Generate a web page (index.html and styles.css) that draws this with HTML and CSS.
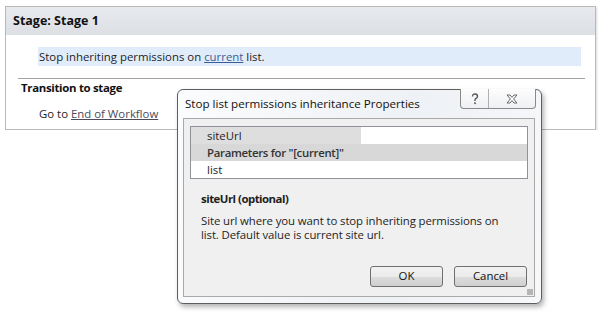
FILE: index.html
```html
<!DOCTYPE html>
<html>
<head>
<meta charset="utf-8">
<link rel="stylesheet" href="styles.css">
</head>
<body>
<div class="panel">
  <div class="panel-head">Stage: Stage 1</div>
  <div class="action">Stop inheriting permissions on <a class="lnk">current</a> list.</div>
  <div class="sep"></div>
  <div class="trans-title">Transition to stage</div>
  <div class="goto">Go to <a class="lnk visited">End of Workflow</a></div>
</div>

<div class="dialog">
  <div class="dlg-title">Stop list permissions inheritance Properties</div>
  <div class="caption-btns">
    <div class="cbtn help"><svg width="10" height="12" viewBox="0 0 10 12"><path d="M2.5 3.5 Q2.5 1 5 1 Q7.5 1 7.5 3.3 Q7.5 4.8 5.8 5.6 Q5 6 5 7.2 V8" fill="none" stroke="#555" stroke-width="1.4"/><rect x="4.2" y="9.3" width="1.6" height="1.8" fill="#555"/></svg></div>
    <div class="cbtn close"><svg width="14" height="10" viewBox="0 0 14 10"><path d="M2 1 H5 L7 3.4 L9 1 H12 L8.6 5 L12 9 H9 L7 6.6 L5 9 H2 L5.4 5 Z" fill="#fff" stroke="#666" stroke-width="1"/></svg></div>
  </div>
  <div class="client">
    <div class="listbox">
      <div class="row r1"><span class="cell-name">siteUrl</span><span class="cell-val"></span></div>
      <div class="row r2">Parameters for "[current]"</div>
      <div class="row r3">list</div>
    </div>
    <div class="desc-title">siteUrl (optional)</div>
    <div class="desc">Site url where you want to stop inheriting permissions on<br>list. Default value is current site url.</div>
    <div class="buttons">
      <div class="btn">OK</div>
      <div class="btn">Cancel</div>
    </div>
    <div class="grip"></div>
  </div>
</div>
</body>
</html>
```
FILE: styles.css
```css
html, body {
  margin: 0;
  padding: 0;
  background: #fff;
  font-family: "Open Sans", "Noto Sans", sans-serif;
  font-size: 11.4px;
  color: #1e1e1e;
}
.panel {
  margin: 6px 0 0 5px;
  width: 589px;
  height: 122px;
  border: 1px solid #b9b9b9;
  box-shadow: 1px 1px 2px rgba(0,0,0,0.15);
  background: #fff;
  display: flex;
  flex-direction: column;
}
.panel-head {
  height: 28px;
  line-height: 28px;
  padding-left: 7px;
  font-weight: bold;
  font-size: 12.5px;
  color: #111;
  background: linear-gradient(#e8eaee, #dcdfe4);
}
.action {
  margin: 12px 0 0 32px;
  width: 542px;
  height: 19px;
  line-height: 19px;
  padding-left: 1px;
  background: #e1ecfb;
}
.lnk {
  color: #3a5d96;
  text-decoration: underline;
}
.lnk.visited {
  color: #4b4b5c;
}
.sep {
  margin: 12px 0 0 12px;
  width: 567px;
  height: 1px;
  background: #a3a3a3;
}
.trans-title {
  margin: 1px 0 0 15px;
  font-weight: bold;
  letter-spacing: -0.3px;
  line-height: 16px;
  color: #111;
}
.goto {
  margin: 10px 0 0 33px;
  line-height: 16px;
}

.dialog {
  position: absolute;
  left: 177px;
  top: 89px;
  width: 363px;
  height: 213px;
  border: 1px solid #5e5e5e;
  border-radius: 6px;
  background: linear-gradient(100deg, #fbfcfd, #eef1f5 60%, #f7f8fa);
  box-shadow: 2px 3px 5px rgba(0,0,0,0.3);
  display: flex;
  flex-direction: column;
}
.dlg-title {
  height: 28px;
  line-height: 28px;
  padding-left: 7px;
  font-size: 11.6px;
  color: #111;
}
.caption-btns {
  position: absolute;
  top: -1px;
  left: 282px;
  display: flex;
  height: 19px;
  border: 1px solid #8a8a8a;
  border-top: none;
  border-radius: 0 0 4px 4px;
  background: linear-gradient(#fdfdfd, #eef0f3);
}
.cbtn {
  display: flex;
  align-items: center;
  justify-content: center;
}
.cbtn.help {
  width: 27px;
  border-right: 1px solid #b0b0b0;
}
.cbtn.close {
  width: 46px;
}
.client {
  margin: 0 6px 6px 5px;
  flex: 1;
  border: 1px solid #a9a9a9;
  background: #f0f0f0;
  position: relative;
  display: flex;
  flex-direction: column;
}
.listbox {
  margin: 7px 0 0 6px;
  width: 336px;
  border: 1px solid #8e939a;
  background: #fff;
  display: flex;
  flex-direction: column;
}
.row {
  height: 17px;
  line-height: 17px;
  padding-left: 16px;
}
.r1 {
  display: flex;
  padding-left: 0;
}
.cell-name {
  width: 154px;
  padding-left: 16px;
  background: #dedede;
}
.r2 {
  background: #d8d8d8;
  font-weight: 600;
  letter-spacing: -0.3px;
  color: #333;
}
.desc-title {
  margin: 12px 0 0 17px;
  font-weight: bold;
  letter-spacing: -0.5px;
  line-height: 16px;
}
.desc {
  margin: 7px 0 0 17px;
  line-height: 13.5px;
  letter-spacing: -0.1px;
}
.buttons {
  margin: 25px 0 0 186px;
  display: flex;
  gap: 11px;
}
.btn {
  width: 71px;
  height: 19px;
  line-height: 18px;
  text-align: center;
  border: 1px solid #707070;
  border-radius: 3px;
  background: linear-gradient(#f2f2f2 0%, #ebebeb 50%, #dddddd 51%, #cfcfcf 100%);
  color: #111;
}
.grip {
  position: absolute;
  right: 1px;
  bottom: 1px;
  width: 6px;
  height: 6px;
  background-image: radial-gradient(circle, #b5b5b5 0.8px, transparent 1px);
  background-size: 2px 2px;
}
```
